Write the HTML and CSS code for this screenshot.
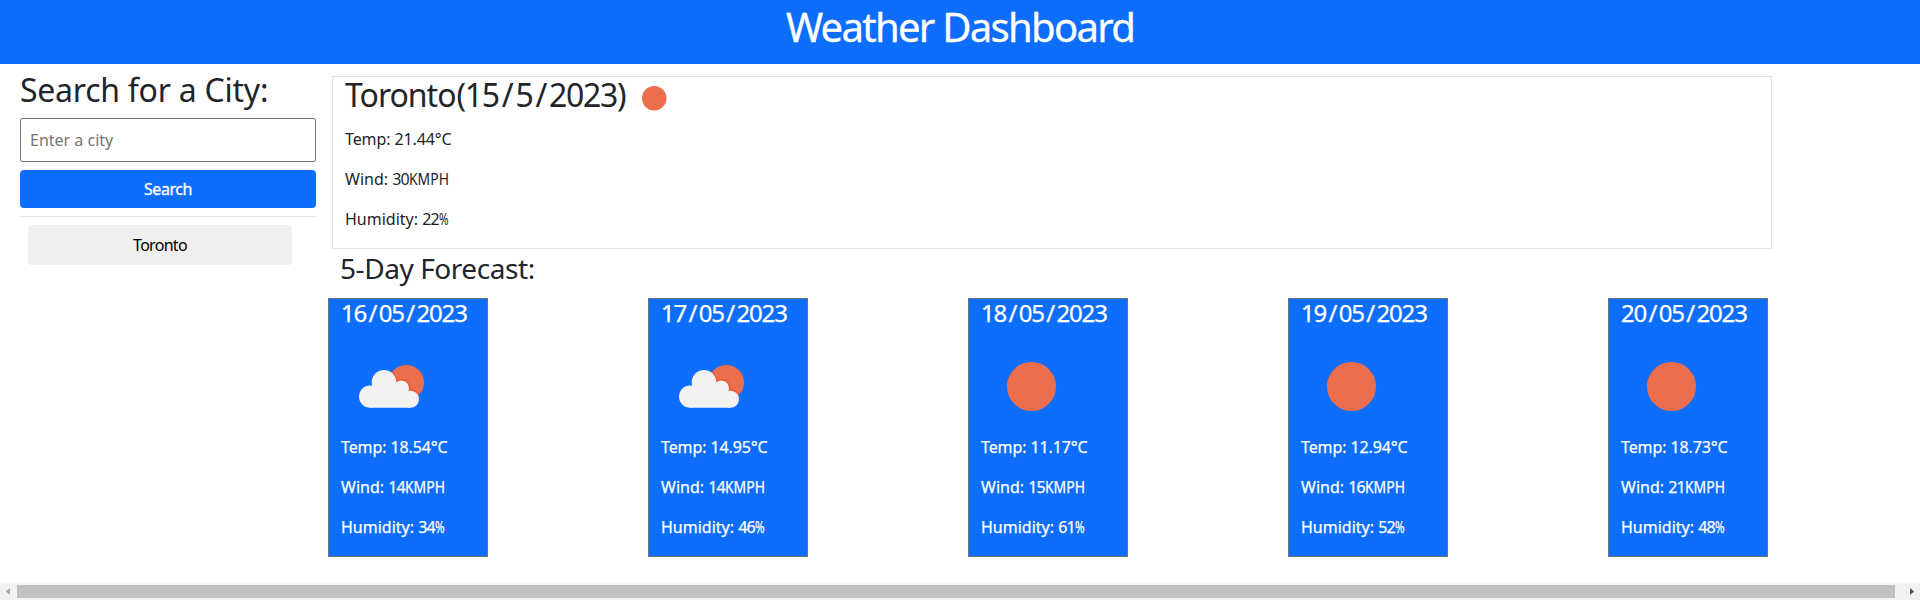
FILE: index.html
```html
<!DOCTYPE html>
<html lang="en">
<head>
<meta charset="utf-8">
<title>Weather Dashboard</title>
<link rel="stylesheet" href="styles.css">
</head>
<body>
<svg class="defs" width="0" height="0">
  <symbol id="sun" viewBox="0 0 100 100"><circle cx="50.5" cy="50.5" r="24.5" fill="#ec6e4c"/></symbol>
  <symbol id="cloud" viewBox="0 0 100 100">
    <clipPath id="disc"><circle cx="65.3" cy="46.6" r="17.7"/></clipPath>
    <circle cx="65.3" cy="46.6" r="17.7" fill="#ec6e4c"/>
    <g clip-path="url(#disc)" fill="#e6532f"><circle cx="43" cy="46.6" r="13.6"/><circle cx="60.5" cy="52" r="9"/><circle cx="70" cy="63.3" r="9.9"/></g>
    <g fill="#f2f2f0"><circle cx="43" cy="46.3" r="12.3"/><circle cx="29.2" cy="60.6" r="11.2"/><circle cx="60.4" cy="52.3" r="7.7"/><circle cx="69.4" cy="63.2" r="8.6"/><path d="M29 50h14l18 2 8 10v9.8H29z"/></g>
  </symbol>
</svg>
<header class="header"><h1>Weather Dashboard</h1></header>
<main class="layout">
  <aside class="sidebar">
    <h2>Search for a City:</h2>
    <input class="city" type="text" placeholder="Enter a city">
    <button class="search">Search</button>
    <div class="history"><button class="recent">Toronto</button></div>
  </aside>
  <section class="content">
    <div class="today">
      <div class="place"><h2>Toronto<span class="date">(15<i>/</i>5<i>/</i>2023)</span></h2><svg class="now"><use href="#sun"/></svg></div>
      <p class="temp">Temp: 21.44°C</p><p>Wind: <span class="num">30</span><span class="unit">KMPH</span></p><p>Humidity: <span class="num">22</span><span class="pct">%</span></p>
    </div>
    <h3>5-Day Forecast:</h3>
    <div class="cards">
      <article class="card"><h4>16<i>/</i>05<i>/</i>2023</h4><svg class="icon"><use href="#cloud"/></svg><p class="temp">Temp: 18.54°C</p><p>Wind: <span class="num">14</span><span class="unit">KMPH</span></p><p>Humidity: <span class="num">34</span><span class="pct">%</span></p></article>
      <article class="card"><h4>17<i>/</i>05<i>/</i>2023</h4><svg class="icon"><use href="#cloud"/></svg><p class="temp">Temp: 14.95°C</p><p>Wind: <span class="num">14</span><span class="unit">KMPH</span></p><p>Humidity: <span class="num">46</span><span class="pct">%</span></p></article>
      <article class="card"><h4>18<i>/</i>05<i>/</i>2023</h4><svg class="icon"><use href="#sun"/></svg><p class="temp">Temp: 11.17°C</p><p>Wind: <span class="num">15</span><span class="unit">KMPH</span></p><p>Humidity: <span class="num">61</span><span class="pct">%</span></p></article>
      <article class="card"><h4>19<i>/</i>05<i>/</i>2023</h4><svg class="icon"><use href="#sun"/></svg><p class="temp">Temp: 12.94°C</p><p>Wind: <span class="num">16</span><span class="unit">KMPH</span></p><p>Humidity: <span class="num">52</span><span class="pct">%</span></p></article>
      <article class="card"><h4>20<i>/</i>05<i>/</i>2023</h4><svg class="icon"><use href="#sun"/></svg><p class="temp">Temp: 18.73°C</p><p>Wind: <span class="num">21</span><span class="unit">KMPH</span></p><p>Humidity: <span class="num">48</span><span class="pct">%</span></p></article>
    </div>
  </section>
</main>
<footer class="scrollbar">
  <svg class="arrow" viewBox="0 0 17 17"><path d="M10 5v7L6 8.5z" fill="#a3a3a3"/></svg>
  <div class="thumb"></div>
  <svg class="arrow" viewBox="0 0 17 17"><path d="M7 5v7l4-3.500z" fill="#505050"/></svg>
</footer>
</body>
</html>
```
FILE: styles.css
```css
* { box-sizing: border-box; }
body { margin: 0; height: 600px; overflow: hidden; display: flex; flex-direction: column; font: 16px/24px "Trebuchet MS", "Noto Sans", sans-serif; color: #212529; background: #fff; }
h1, h2, h3, h4, p { margin: 0; font-weight: 400; white-space: nowrap; }
i { font-style: normal; }
.defs { position: absolute; }
.header { height: 64px; flex: none; background: #0d6efd; color: #fff; text-align: center; -webkit-text-stroke: .3px #fff; }
h1 { font-size: 40px; line-height: 53px; letter-spacing: -1.7px; }
.layout { flex: 1; display: flex; min-height: 0; }
.sidebar { width: 316px; padding: 7px 0 0 20px; }
h2 { font-size: 32px; line-height: 38px; letter-spacing: -.25px; }
.sidebar h2 { height: 47px; }
button, input { display: block; font: inherit; }
.city { width: 296px; height: 44px; padding: 0 9px; border: 1px solid #767676; border-radius: 2px; }
.city::placeholder { color: #757575; }
.search { width: 296px; height: 38px; margin: 8px 0; padding: 0; border: 0; border-radius: 4px; background: #0d6efd; color: #fff; letter-spacing: -.45px; -webkit-text-stroke: .3px #fff; }
.history { border-top: 1px solid #dee2e6; padding: 8px; }
.recent { width: 264px; height: 40px; padding: 0; border: 0; border-radius: 4px; background: #efefef; color: #000; letter-spacing: -.7px; }
.content { width: 1440px; margin-left: 12px; padding-top: 12px; }
.today { height: 173px; margin: 0 -4px 0 4px; border: 1px solid #dee2e6; padding: 0 12px; }
.place { display: flex; height: 50px; }
.place h2 { width: 284px; line-height: 36px; letter-spacing: -1px; }
.date { letter-spacing: -1.3px; padding-left: 1px; }
.date i { padding: 0 3px; }
.now { width: 50px; height: 50px; margin-top: -4px; }
p { height: 40px; }
.temp { letter-spacing: -.1px; }
.num { letter-spacing: -.8px; }
.unit, .pct { display: inline-block; transform-origin: left; }
.unit { transform: scaleX(.87); }
.pct { transform: scaleX(.72); }
h3 { font-size: 28px; line-height: 34px; height: 49px; padding: 2px 0 0 12px; letter-spacing: -.43px; }
.cards { display: flex; justify-content: space-between; }
.card { width: 160px; height: 259px; padding: 0 12px; border: 1px solid #6c757d; background: #0d6efd; color: #fff; -webkit-text-stroke: .25px #fff; }
h4 { font-size: 24px; line-height: 28px; height: 37px; letter-spacing: -1.15px; }
h4 i { padding: 0 2.4px; }
.icon { display: block; width: 100px; height: 100px; margin-bottom: -1px; }
.scrollbar { height: 17px; flex: none; display: flex; align-items: center; background: #f1f1f1; }
.arrow { width: 17px; height: 17px; }
.thumb { width: 1878px; height: 13px; margin-right: 8px; background: #c1c1c1; }
```
